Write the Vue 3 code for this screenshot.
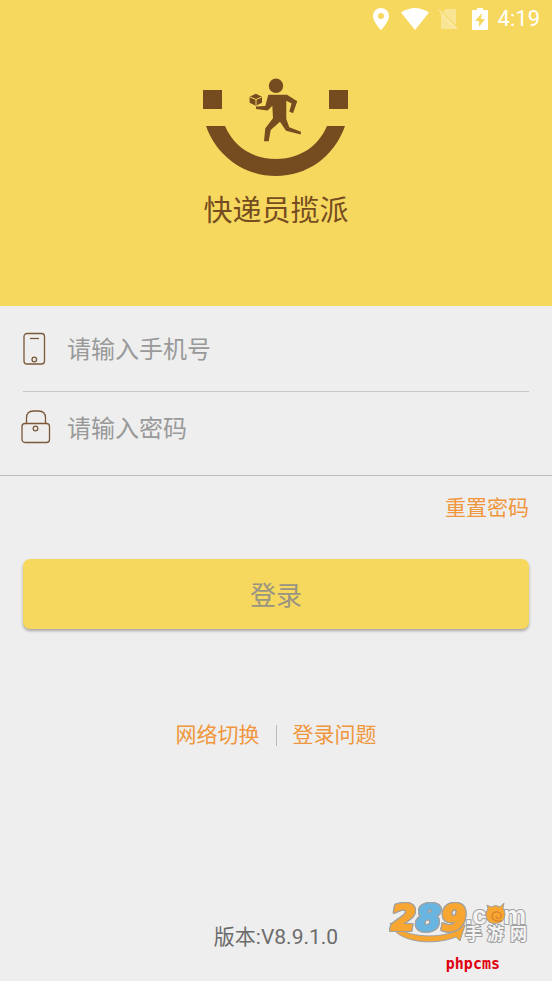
<script setup>
import { ref } from 'vue'

const phone = ref('')
const password = ref('')
</script>

<template>
  <main class="page">
    <header class="hero">
      <div class="status">
        <svg width="16" height="22" viewBox="0 0 16 22" aria-hidden="true">
          <path fill="#fff" fill-rule="evenodd" d="M8 0a8 8 0 0 0-8 8c0 6 8 14 8 14s8-8 8-14a8 8 0 0 0-8-8zm0 5a3 3 0 1 1 0 6 3 3 0 0 1 0-6z" />
        </svg>
        <svg class="wifi" width="28" height="22" viewBox="0 0 28 22" aria-hidden="true">
          <path fill="#fff" d="M0 4.500Q14-4.500 28 4.500L14 22z" />
        </svg>
        <svg class="sim" width="20" height="22" viewBox="0 0 20 22" aria-hidden="true">
          <path fill="#fff" fill-opacity=".35" d="M8 1h9q1 0 1 1v15L5 4zM3 5l15 15q0 1-1 1H4q-1 0-1-1z" />
          <path stroke="#fff" stroke-opacity=".4" stroke-width="1.500" d="M1 2l18 19" />
        </svg>
        <svg class="battery" width="16" height="22" viewBox="0 0 16 22" aria-hidden="true">
          <path fill="#fff" fill-rule="evenodd" d="M5 0h6v2h4q1 0 1 1v18q0 1-1 1H1q-1 0-1-1V3q0-1 1-1h4zM10 5L3 13h4v6l6-8H9z" />
        </svg>
        <span class="clock">4:19</span>
      </div>
      <svg class="logo" width="146" height="98" viewBox="0 0 146 98" aria-hidden="true">
        <g fill="#754c20">
          <path d="M0 12h19v19H0zM126 12h19v19h-19zM3 48h19C31 69 50 81 73 81s42-12 51-33h18C131 79 104 98 73 98S14 79 3 48z" />
          <circle cx="73" cy="7.800" r="7.200" />
          <path d="M65.300 16.700h18.700l10.300 6.500-4.300 12.100-3.700-1.800 2.300-8-5.300-2.700V41l3 8.300L98 53.700l-.3 2.800L83 52.700l-6-9-9.300 8.300-2 11.300h-4.700l1.300-13L70 40.300l-.7-12.600-4.600 4.800-11.700-1.500v-2.500l9.300-.4z" />
          <path d="M52.800 15.700l6.200 3v6l-6.200 3-6.200-3v-6z" />
        </g>
        <path d="M47 19l6 2.500 5.700-2.500M53 21.500V27" fill="none" stroke="#f6d85f" />
      </svg>
      <h1>快递员揽派</h1>
    </header>

    <form class="form" @submit.prevent>
      <div class="fields">
        <div class="field">
          <label for="phone" aria-label="手机号">
            <svg width="30" height="34" viewBox="0 0 30 34" fill="none" stroke="#7b5838" stroke-width="1.300" aria-hidden="true">
              <rect x="3" y="1.500" width="20.500" height="30.500" rx="3" />
              <path d="M9 6.500h9" />
              <circle cx="13.300" cy="27.500" r="2.300" />
            </svg>
          </label>
          <input id="phone" v-model="phone" type="tel" placeholder="请输入手机号" />
        </div>
        <div class="field second">
          <label for="password" aria-label="密码">
            <svg width="30" height="34" viewBox="0 0 30 34" fill="none" stroke="#7b5838" stroke-width="1.300" aria-hidden="true">
              <rect x="1" y="13.500" width="27.500" height="19" rx="3" />
              <path d="M5.500 13.500V8q0-7 7-7h5q7 0 7 7v5.500" />
              <circle cx="14.500" cy="18.500" r="2.300" />
            </svg>
          </label>
          <input id="password" v-model="password" type="password" placeholder="请输入密码" />
        </div>
      </div>
      <div class="actions">
        <a class="reset" href="#reset">重置密码</a>
        <button type="submit">登录</button>
      </div>
    </form>

    <nav class="links">
      <a href="#network">网络切换</a>
      <span class="bar"></span>
      <a href="#help">登录问题</a>
    </nav>

    <footer>版本:V8.9.1.0</footer>

    <div class="watermark">
      <svg width="144" height="52" viewBox="0 -8 144 52" aria-hidden="true">
        <path d="M2 22C16 36 46 38 66 31l-3-3 14-4-5 16-4-4C46 45 8 42 2 22z" fill="#f8a632" stroke="#a0a0a0" />
        <g class="digits">
          <text class="orange" x="3" y="29">2</text>
          <text class="orange" x="53" y="29">9</text>
          <text class="blue" x="28" y="29">8</text>
        </g>
        <g class="domain">
          <text x="77" y="23">.c</text>
          <text x="115" y="23">m</text>
        </g>
        <path d="M99 4l4 2q5-3 9 0l4-4-1 5q4 7 0 12-6 6-14 2-6-7-1-13z" fill="#f8a632" stroke="#a0a0a0" />
        <path d="M114 20q-10 1-10-5 1-5 6-4 5 2 2 6-3 2-4-2" fill="none" stroke="#d5842b" stroke-width="1.300" />
        <g class="site">
          <text x="77" y="39">手</text>
          <text x="99" y="39">游</text>
          <text x="122" y="39">网</text>
        </g>
      </svg>
      <span class="cms">phpcms</span>
    </div>
  </main>
</template>

<style>
body {
  background: #eee;
}
</style>

<style scoped>
.page {
  position: relative;
  display: flex;
  flex-direction: column;
  min-height: 100vh;
  background: #eee;
  font-family: Roboto, "Noto Sans CJK SC", sans-serif;
}
.hero {
  display: flex;
  flex-direction: column;
  align-items: center;
  padding-bottom: 75px;
  background: #f6d85f;
}
.status {
  align-self: stretch;
  display: flex;
  justify-content: flex-end;
  align-items: center;
  height: 38px;
  padding-right: 12px;
  color: #fff;
}
.wifi {
  margin-left: 12px;
}
.sim {
  margin-left: 9px;
}
.battery {
  margin-left: 14px;
}
.clock {
  margin-left: 10px;
  font-size: 22px;
  line-height: 24px;
}
.logo {
  margin-top: 40px;
}
h1 {
  margin: 15px 0 0;
  font-size: 29px;
  line-height: 40px;
  font-weight: 400;
  color: #754c20;
}
.fields {
  border-bottom: 1px solid #bdbdbd;
}
.field {
  display: flex;
  align-items: center;
  gap: 16px;
  height: 85px;
  padding: 0 23px 0 21px;
  box-sizing: border-box;
}
.second {
  height: 84px;
  padding-bottom: 12px;
  background: linear-gradient(#c8c8c8, #c8c8c8) 23px 0 / calc(100% - 46px) 1px no-repeat;
}
label {
  display: flex;
}
input {
  flex: 1;
  min-width: 0;
  padding: 3px 0 0;
  border: 0;
  outline: 0;
  background: transparent;
  font: inherit;
  font-size: 24px;
  line-height: 36px;
  color: #555;
}
input::placeholder {
  color: #999;
  opacity: 1;
}
.actions {
  display: flex;
  flex-direction: column;
  padding: 17px 23px 0;
}
a {
  font-size: 21px;
  line-height: 30px;
  color: #f0963c;
  text-decoration: none;
}
.reset {
  align-self: flex-end;
}
button {
  height: 70px;
  margin-top: 36px;
  padding: 0 0 2px;
  border: 0;
  border-radius: 7px;
  background: #f6d85f;
  box-shadow: 0 2px 3px rgba(0, 0, 0, 0.3);
  font: inherit;
  font-size: 26px;
  color: #999483;
}
.links {
  display: flex;
  justify-content: center;
  align-items: center;
  gap: 16px;
  margin-top: 91px;
}
.bar {
  width: 1px;
  height: 21px;
  background: #bbb;
}
footer {
  margin-top: auto;
  padding-bottom: 29px;
  text-align: center;
  font-size: 21px;
  line-height: 30px;
  color: #6c6c6c;
}
.watermark {
  position: absolute;
  right: 20px;
  bottom: 8px;
  display: flex;
  flex-direction: column;
  align-items: flex-end;
  gap: 10px;
}
.watermark svg {
  overflow: visible;
}
.digits text {
  font: italic bold 36px "DejaVu Sans", sans-serif;
  stroke-width: 2px;
  filter: drop-shadow(1px 0 0 #a0a0a0) drop-shadow(-1px 0 0 #a0a0a0) drop-shadow(0 1px 0 #a0a0a0) drop-shadow(0 -1px 0 #a0a0a0);
}
.orange {
  fill: #f8a632;
  stroke: #f8a632;
}
.blue {
  fill: #69b5e2;
  stroke: #69b5e2;
}
.domain text {
  font: bold 26px "Liberation Sans", sans-serif;
  fill: #f4f4f4;
  stroke: #a0a0a0;
  stroke-width: 2px;
  paint-order: stroke;
}
.site text {
  font: bold 17px "Noto Sans CJK SC", sans-serif;
  fill: #f4f4f4;
  stroke: #a0a0a0;
  stroke-width: 2px;
  paint-order: stroke;
}
.cms {
  padding-right: 32px;
  font: bold 15px/18px "DejaVu Sans Mono", monospace;
  color: #e00010;
}
</style>
